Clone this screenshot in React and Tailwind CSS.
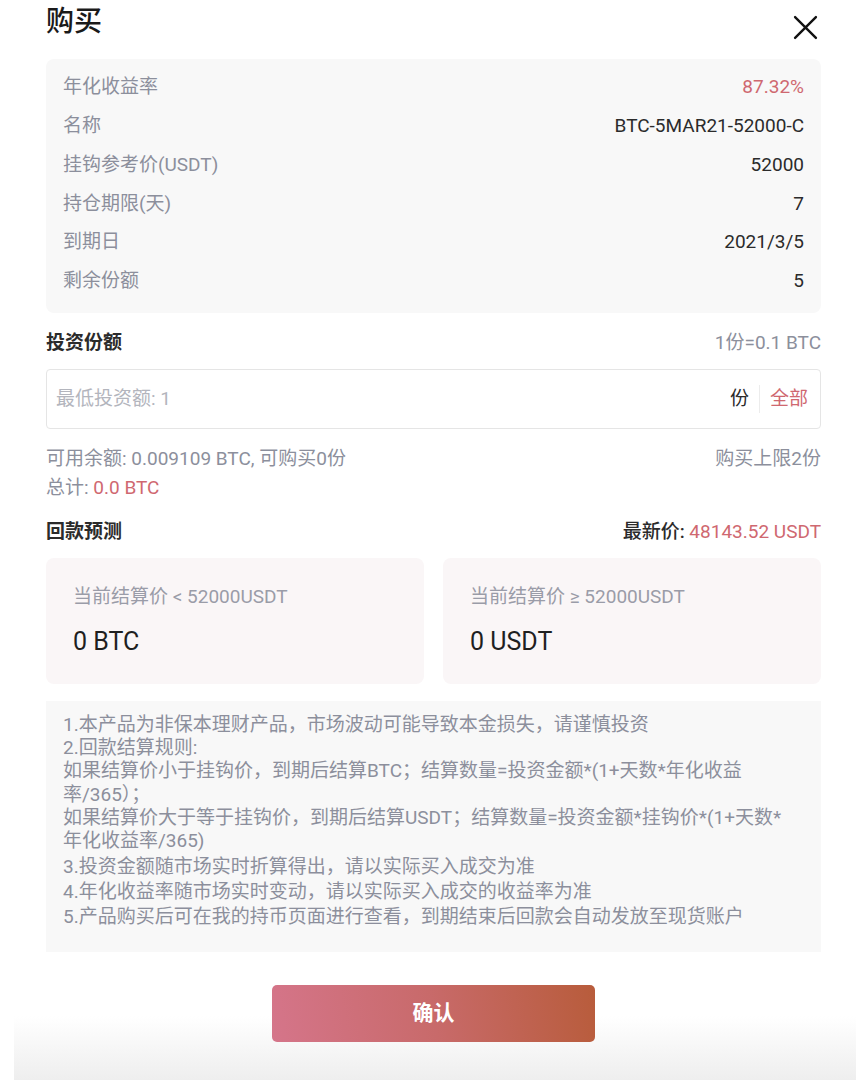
import React from "react";

const font = { fontFamily: 'Roboto, "Noto Sans CJK SC", sans-serif' };

function InfoRow({ label, value, red }) {
  return (
    <div className="flex h-[38.8px] items-center justify-between">
      <span className="text-[#8c8f9c]">{label}</span>
      <span className={red ? "text-[#cf6870]" : "text-[#2b2b2b]"}>{value}</span>
    </div>
  );
}

export default function App() {
  return (
    <div
      className="relative w-[856px] h-[1090px] bg-white text-[19px] overflow-hidden"
      style={font}
    >
      {/* header */}
      <div className="flex h-[44px] items-center justify-between pl-[46px] pr-[38px]">
        <span className="text-[28px] font-medium leading-[38px] text-[#1a1a1a]">购买</span>
        <svg width="25" height="25" viewBox="0 0 24 24" className="mt-[10px]">
          <path d="M2 2 L22 22 M22 2 L2 22" stroke="#111" strokeWidth="2.3" strokeLinecap="round" />
        </svg>
      </div>

      <div className="mx-[46px] w-[775px]">
        {/* info card */}
        <div className="mt-[15px] rounded-[8px] bg-[#f8f8f8] px-[17px] pt-[9px] pb-[12px]">
          <InfoRow label="年化收益率" value="87.32%" red />
          <InfoRow label="名称" value="BTC-5MAR21-52000-C" />
          <InfoRow label="挂钩参考价(USDT)" value="52000" />
          <InfoRow label="持仓期限(天)" value="7" />
          <InfoRow label="到期日" value="2021/3/5" />
          <InfoRow label="剩余份额" value="5" />
        </div>

        {/* invest amount */}
        <div className="mt-[16px] flex h-[28px] items-center justify-between">
          <span className="font-semibold text-[#2b2b2b]">投资份额</span>
          <span className="text-[#8c8f9c]">1份=0.1 BTC</span>
        </div>
        <div className="mt-[12px] flex h-[60px] items-center rounded-[4px] border border-[#e5e5e5] pl-[9px] pr-[12px]">
          <span className="flex-1 text-[#b3b5bd]">最低投资额: 1</span>
          <span className="text-[#2b2b2b]">份</span>
          <span className="mx-[10px] h-[28px] w-px bg-[#ececec]" />
          <span className="text-[#cf6870]">全部</span>
        </div>

        <div className="mt-[15px] leading-[29px]">
          <div className="flex justify-between">
            <span className="text-[#8c8f9c]">可用余额: 0.009109 BTC, 可购买0份</span>
            <span className="text-[#8c8f9c]">购买上限2份</span>
          </div>
          <div>
            <span className="text-[#8c8f9c]">总计: </span>
            <span className="text-[#cf6870]">0.0 BTC</span>
          </div>
        </div>

        {/* forecast */}
        <div className="mt-[16px] flex h-[28px] items-center justify-between">
          <span className="font-semibold text-[#2b2b2b]">回款预测</span>
          <span>
            <span className="font-medium text-[#2b2b2b]">最新价: </span>
            <span className="text-[#cf6870]">48143.52 USDT</span>
          </span>
        </div>
        <div className="mt-[12px] grid grid-cols-2 gap-[19px]">
          <div className="h-[126px] rounded-[8px] bg-[#faf6f7] pl-[27px] pt-[26px]">
            <div className="leading-[26px] text-[#9a9ca8]">当前结算价 &lt; 52000USDT</div>
            <div className="mt-[17px] text-[25px] leading-[30px] text-[#1f1f1f]">0 BTC</div>
          </div>
          <div className="h-[126px] rounded-[8px] bg-[#faf6f7] pl-[27px] pt-[26px]">
            <div className="leading-[26px] text-[#9a9ca8]">当前结算价 ≥ 52000USDT</div>
            <div className="mt-[17px] text-[25px] leading-[30px] text-[#1f1f1f]">0 USDT</div>
          </div>
        </div>

        {/* notes */}
        <div className="mt-[17px] h-[251px] bg-[#f8f8f8] pl-[17px] pr-[14px] pt-[12px] leading-[23.3px] text-[#8c8f9c]">
          <p>1.本产品为非保本理财产品，市场波动可能导致本金损失，请谨慎投资</p>
          <p>2.回款结算规则:</p>
          <p>如果结算价小于挂钩价，到期后结算BTC；结算数量=投资金额*(1+天数*年化收益率/365）；</p>
          <p>
            如果结算价大于等于挂钩价，到期后结算USDT；结算数量=投资金额*挂钩价*(1+天数*
            <br />
            年化收益率/365)
          </p>
          <p className="mt-[2px]">3.投资金额随市场实时折算得出，请以实际买入成交为准</p>
          <p className="mt-[2px]">4.年化收益率随市场实时变动，请以实际买入成交的收益率为准</p>
          <p className="mt-[2px]">5.产品购买后可在我的持币页面进行查看，到期结束后回款会自动发放至现货账户</p>
        </div>
      </div>

      {/* footer */}
      <div className="ml-[14px] h-[128px] w-[842px] bg-[linear-gradient(to_bottom,#ffffff_0%,#ffffff_50%,#eeeeee_100%)] pt-[33px]">
        <div className="ml-[258px] flex h-[57px] w-[323px] items-center justify-center rounded-[5px] bg-[linear-gradient(80deg,#d5758a_0%,#c86a6a_50%,#b85c3b_100%)]">
          <span className="text-[21px] font-semibold text-white">确认</span>
        </div>
      </div>
    </div>
  );
}
